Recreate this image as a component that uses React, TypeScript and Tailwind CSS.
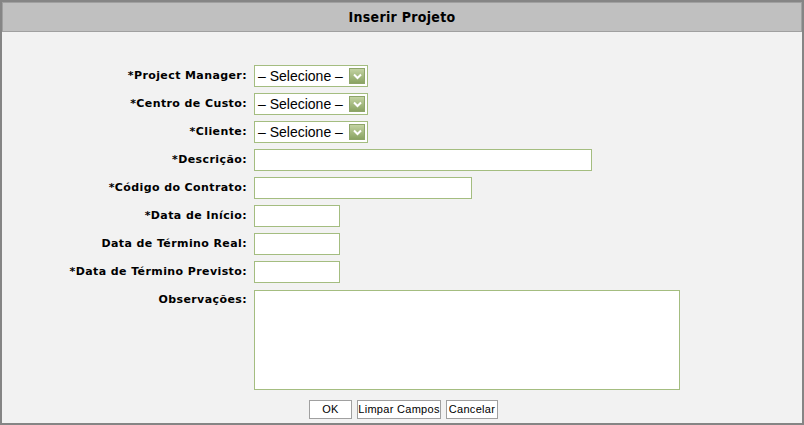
import React from 'react';

// Tela "Inserir Projeto" - formulário simples
const labelCls = 'w-[245px] shrink-0 text-right text-[11px] font-bold tracking-[0.4px] text-black';
const inputCls = 'h-[22px] border border-[#a4bd80] bg-white';
const btnCls = 'h-[19px] px-0 border border-[#a0a0a0] bg-white text-[11px] tracking-[0.3px] text-black whitespace-nowrap';

const SelectBox = () => (
  <div className={`${inputCls} w-[114px] flex items-center justify-between pl-[3px] pr-[2px]`}>
    <span className="text-[14px] leading-none text-black font-['Liberation_Sans',sans-serif]">– Selecione –</span>
    <div className="w-[16px] h-[16px] border border-[#8ea56a] bg-gradient-to-b from-[#c3d3a2] to-[#8aa363] flex items-center justify-center">
      <svg width="9" height="7" viewBox="0 0 9 7">
        <path d="M1 1.5 L4.5 5 L8 1.5" stroke="white" strokeWidth="2" fill="none" />
      </svg>
    </div>
  </div>
);

const Row = ({ label, children }: { label: string; children: React.ReactNode }) => (
  <div className="flex h-[28px] items-center gap-[7px]">
    <div className={labelCls}>{label}</div>
    {children}
  </div>
);

export default function App() {
  return (
    <div className="w-[804px] h-[425px] border-2 border-[#858585] bg-[#f2f2f2] flex flex-col font-['DejaVu_Sans',Verdana,sans-serif]">
      <div className="h-[30px] shrink-0 border border-[#a0a0a0] bg-[#c0c0c0] flex items-center justify-center">
        <span className="text-[14px] font-bold text-black font-['DejaVu_Sans_Condensed',sans-serif] tracking-[0.3px]">Inserir Projeto</span>
      </div>

      <div className="pt-[30px] flex flex-col">
        <Row label="*Project Manager:"><SelectBox /></Row>
        <Row label="*Centro de Custo:"><SelectBox /></Row>
        <Row label="*Cliente:"><SelectBox /></Row>
        <Row label="*Descrição:"><div className={`${inputCls} w-[338px]`} /></Row>
        <Row label="*Código do Contrato:"><div className={`${inputCls} w-[218px]`} /></Row>
        <Row label="*Data de Início:"><div className={`${inputCls} w-[86px]`} /></Row>
        <Row label="Data de Término Real:"><div className={`${inputCls} w-[86px]`} /></Row>
        <Row label="*Data de Término Previsto:"><div className={`${inputCls} w-[86px]`} /></Row>

        <div className="flex items-start gap-[7px] pt-[4px]">
          <div className={`${labelCls} pt-[2px]`}>Observações:</div>
          <div className="h-[100px] w-[426px] border border-[#a4bd80] bg-white" />
        </div>

        <div className="flex gap-[5px] pt-[10px] pl-[307px] font-['Liberation_Sans',sans-serif]">
          <button className={`${btnCls} w-[43px]`}>OK</button>
          <button className={`${btnCls} w-[84px]`}>Limpar Campos</button>
          <button className={`${btnCls} w-[52px]`}>Cancelar</button>
        </div>
      </div>
    </div>
  );
}
